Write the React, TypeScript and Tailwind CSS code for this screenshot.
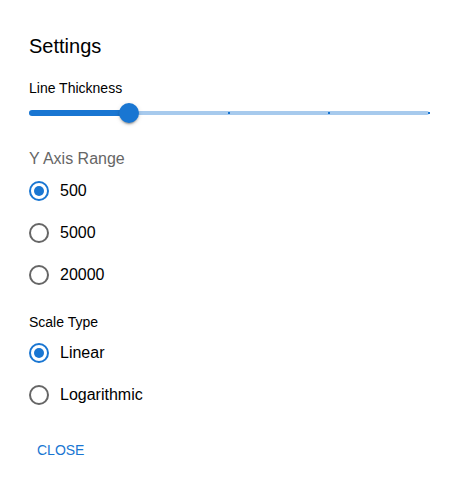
import { useState } from "react";

const MARKS = [0, 25, 50, 75, 100];
const RANGES = ["500", "5000", "20000"];
const SCALES = ["Linear", "Logarithmic"];

type RadioListProps = {
  name: string;
  options: string[];
  value: string;
  onChange: (value: string) => void;
};

function RadioList({ name, options, value, onChange }: RadioListProps) {
  return (
    <div className="flex flex-col items-start">
      {options.map((option) => (
        <label key={option} className="flex h-[42px] cursor-pointer items-center gap-[11px] text-base">
          <input
            type="radio"
            name={name}
            value={option}
            checked={value === option}
            onChange={() => onChange(option)}
            className="grid size-5 shrink-0 cursor-pointer appearance-none place-items-center rounded-full border-2 border-[#666666] before:size-[10px] before:rounded-full checked:border-[#1976d2] checked:before:bg-[#1976d2]"
          />
          {option}
        </label>
      ))}
    </div>
  );
}

export default function App() {
  const [thickness, setThickness] = useState(25);
  const [range, setRange] = useState("500");
  const [scale, setScale] = useState("Linear");

  return (
    <main className="bg-white px-[29px] py-[30px] font-['Liberation_Sans',Arial,sans-serif] text-[#000000]">
      <h1 className="text-xl leading-8">Settings</h1>

      <label htmlFor="thickness" className="mt-4 block text-sm leading-5">
        Line Thickness
      </label>
      <div className="relative mt-[5px] h-5">
        <div className="absolute inset-x-0 top-2 h-1 rounded-full bg-[#a7caed]" />
        <div
          className="absolute left-0 top-[7px] h-[6px] rounded-full bg-[#1976d2]"
          style={{ width: `${thickness}%` }}
        />
        {MARKS.filter((mark) => mark > thickness).map((mark) => (
          <span
            key={mark}
            className="absolute top-[9px] -ml-px size-[2px] bg-[#1976d2]"
            style={{ left: `${mark}%` }}
          />
        ))}
        <input
          id="thickness"
          type="range"
          min={0}
          max={100}
          step={25}
          value={thickness}
          onChange={(event) => setThickness(Number(event.target.value))}
          className="absolute -left-[10px] top-0 h-5 w-[calc(100%+20px)] cursor-pointer appearance-none bg-transparent [&::-webkit-slider-thumb]:size-5 [&::-webkit-slider-thumb]:appearance-none [&::-webkit-slider-thumb]:rounded-full [&::-webkit-slider-thumb]:bg-[#1976d2] [&::-webkit-slider-thumb]:shadow-[0_3px_1px_-2px_rgba(0,0,0,0.2),0_2px_2px_0_rgba(0,0,0,0.14),0_1px_5px_0_rgba(0,0,0,0.12)]"
        />
      </div>

      <fieldset className="mt-6">
        <legend className="text-base leading-[23px] text-[#666666]">Y Axis Range</legend>
        <RadioList name="range" options={RANGES} value={range} onChange={setRange} />
      </fieldset>

      <fieldset className="mt-4">
        <legend className="text-sm leading-5">Scale Type</legend>
        <RadioList name="scale" options={SCALES} value={scale} onChange={setScale} />
      </fieldset>

      <button
        type="button"
        className="mt-4 cursor-pointer rounded px-2 py-2 text-sm uppercase leading-5 text-[#1976d2]"
      >
        Close
      </button>
    </main>
  );
}
